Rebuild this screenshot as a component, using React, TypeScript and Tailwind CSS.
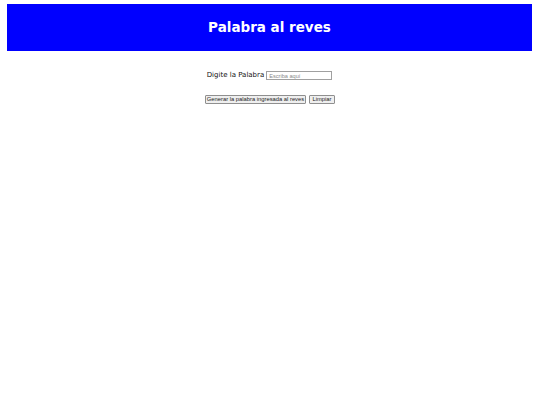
import { useState } from "react";

const App = () => {
  const [palabra, setPalabra] = useState("");
  const [resultado, setResultado] = useState("");

  const invertir = () => setResultado(palabra.split("").reverse().join(""));
  const limpiar = () => {
    setPalabra("");
    setResultado("");
  };

  return (
    <div className="min-h-[405px] bg-white px-[7px] pt-[4px] font-['DejaVu_Sans',sans-serif]">
      <header className="flex h-[47px] w-[525px] items-center justify-center bg-[#0000ff]">
        <h1 className="text-[13.5px] font-bold leading-none text-white">
          Palabra al reves
        </h1>
      </header>

      <div className="mt-[20px] flex items-center justify-center gap-[2px] pr-[1px]">
        <label className="text-[7px] leading-none text-[#111]">
          Digite la Palabra
        </label>
        <input
          value={palabra}
          onChange={(e) => setPalabra(e.target.value)}
          placeholder="Escriba aquí"
          className="h-[9px] w-[66px] border border-[#a0a0a0] px-[2px] font-['Liberation_Sans',sans-serif] text-[5.6px] leading-none outline-none placeholder:text-[#8a8a8a]"
        />
      </div>

      <div className="mt-[15px] flex items-center justify-center gap-[3px] font-['Liberation_Sans',sans-serif] text-[5.8px] leading-none text-[#222]">
        <button
          onClick={invertir}
          className="h-[9px] w-[101px] rounded-[1px] border border-[#8f8f8f] bg-[#efefef]"
        >
          Generar la palabra ingresada al reves
        </button>
        <button
          onClick={limpiar}
          className="h-[9px] w-[26px] rounded-[1px] border border-[#8f8f8f] bg-[#efefef]"
        >
          Limpiar
        </button>
      </div>

      {resultado && (
        <p className="mt-[8px] text-center text-[6.75px]">{resultado}</p>
      )}
    </div>
  );
};

export default App;
